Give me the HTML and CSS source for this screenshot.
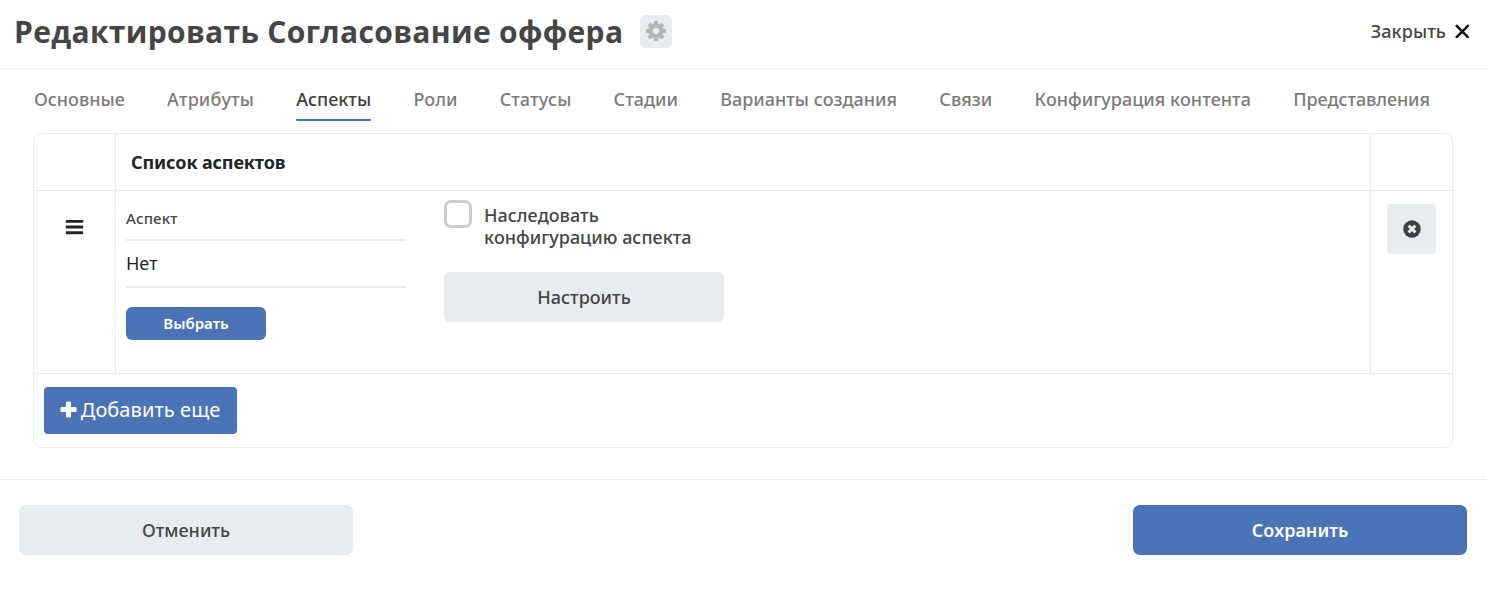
FILE: index.html
```html
<!DOCTYPE html>
<html lang="ru">
<head>
<meta charset="utf-8">
<title>Редактировать Согласование оффера</title>
<link rel="stylesheet" href="styles.css">
</head>
<body>
<header class="header">
  <h1 class="title">Редактировать Согласование оффера</h1>
  <button class="gear" aria-label="Настройки"><svg width="20" height="20" viewBox="0 0 1536 1536"><path fill="#b7b7b7" d="M1024 768q0-106-75-181t-181-75-181 75-75 181 75 181 181 75 181-75 75-181zm512-109v222q0 12-8 23t-20 13l-185 28q-19 54-39 91 35 50 107 138 10 12 10 25t-9 23q-27 37-99 108t-94 71q-12 0-26-9l-138-108q-44 23-91 38-16 136-29 186-7 28-36 28H657q-14 0-24.500-8.500T621 1506l-28-184q-49-16-90-37l-141 107q-10 9-25 9-14 0-25-11-126-114-165-168-7-10-7-23 0-12 8-23 15-21 51-66.500t54-70.500q-27-50-41-99L29 913q-13-2-21-12.500T0 877V655q0-12 8-23t19-13l186-28q14-46 39-92-40-57-107-138-10-12-10-24 0-10 9-23 26-36 98.500-107.500T337 135q13 0 26 10l138 107q44-23 91-38 16-136 29-186 7-28 36-28h222q14 0 24.500 8.500T915 30l28 184q49 16 90 37l142-107q9-9 24-9 13 0 25 10 129 119 165 170 7 8 7 22 0 12-8 23-15 21-51 66.500t-54 70.500q26 50 41 98l183 28q13 2 21 12.500t8 23.500z"/></svg></button>
  <button class="close">Закрыть<svg width="14" height="14" viewBox="0 0 14 14"><path d="M1.700 1.900 12.900 13.100M12.900 1.900 1.700 13.100" stroke="#111" stroke-width="2.500" stroke-linecap="round"/></svg></button>
</header>
<nav class="tabs">
  <a class="tab">Основные</a><a class="tab wide">Атрибуты</a><a class="tab active">Аспекты</a><a class="tab">Роли</a><a class="tab">Статусы</a><a class="tab">Стадии</a><a class="tab">Варианты создания</a><a class="tab">Связи</a><a class="tab">Конфигурация контента</a><a class="tab narrow">Представления</a>
</nav>
<main class="panel">
  <div class="row head"><div></div><div class="list-title">Список аспектов</div><div></div></div>
  <div class="row body">
    <div class="drag"><svg width="19" height="16" viewBox="0 0 19 16"><g fill="#212529"><rect y=".9" x=".8" width="17.400" height="2.900" rx=".6"/><rect y="6.600" x=".8" width="17.400" height="2.900" rx=".6"/><rect y="12.300" x=".8" width="17.400" height="2.900" rx=".6"/></g></svg></div>
    <div class="fields">
      <div class="aspect">
        <div class="label">Аспект</div>
        <div class="value">Нет</div>
        <button class="btn primary pick">Выбрать</button>
      </div>
      <div class="config">
        <label class="check"><span class="box"></span><span>Наследовать<br>конфигурацию аспекта</span></label>
        <button class="btn setup">Настроить</button>
      </div>
    </div>
    <div class="remove"><button class="btn delete" aria-label="Удалить"><svg width="18" height="18" viewBox="0 0 18 18"><circle cx="9" cy="9" r="8.700" fill="#404041"/><path d="m5.600 5.600 6.800 6.800M12.400 5.600l-6.800 6.800" stroke="#e7ecee" stroke-width="2.900"/></svg></button></div>
  </div>
  <div class="add-row"><button class="btn primary add"><svg width="17" height="17" viewBox="0 0 17 17"><path fill="#fff" stroke="#fff" stroke-linejoin="round" d="M6.500 1h4v5.500H16v4h-5.500V16h-4v-5.500H1v-4h5.500z"/></svg>Добавить еще</button></div>
</main>
<footer class="footer"><button class="btn action">Отменить</button><button class="btn primary action">Сохранить</button></footer>
</body>
</html>
```
FILE: styles.css
```css
* { box-sizing: border-box; }
body { margin: 0; background: #fff; color: #454545; font: 500 18px/22px "Noto Sans", "Open Sans", sans-serif; font-kerning: none; }
button { border: 0; margin: 0; padding: 0; font: inherit; font-kerning: none; color: inherit; background: none; }
svg { display: block; }
.header { height: 69px; display: flex; align-items: flex-start; padding: 12px 18px 0 14px; border-bottom: 1px solid #e7ecee; }
.title { width: 609px; margin: 0; font-family: "Open Sans", "Noto Sans", sans-serif; font-size: 30px; line-height: 40px; font-weight: 700; letter-spacing: .33px; white-space: nowrap; }
.gear { width: 32px; height: 33px; margin: 3px 0 0 17px; padding-bottom: 1px; border-radius: 6px; background: #e7ecee; display: grid; place-items: center; }
.close { margin: 8px 0 0 auto; display: flex; align-items: center; gap: 9px; letter-spacing: .1px; }
.tabs { height: 64px; padding: 19px 57px 0 34px; display: flex; justify-content: space-between; align-items: flex-start; color: #7b7b7b; white-space: nowrap; }
.tab { height: 33px; }
.wide { letter-spacing: .12px; }
.narrow { letter-spacing: -.09px; }
.active { color: #404041; border-bottom: 2px solid #4b74b8; border-radius: 1px; }
.panel { width: 1420px; height: 315px; margin-left: 33px; border: 1px solid #e7ecee; border-radius: 8px; }
.row { display: grid; grid-template-columns: 81px 1fr 82px; border-bottom: 1px solid #e7ecee; }
.row > :nth-child(n+2) { border-left: 1px solid #e7ecee; }
.head { height: 57px; }
.list-title { padding: 17px 15px; font-weight: 700; letter-spacing: -.13px; color: #212529; }
.body { height: 183px; }
.drag { padding: 28px 0 0 31px; }
.fields { display: flex; gap: 38px; padding-left: 10px; }
.aspect { width: 280px; }
.label { height: 50px; padding-top: 16px; font-size: 15px; letter-spacing: .15px; border-bottom: 2px solid #e7ecee; }
.value { height: 47px; padding-top: 11px; border-bottom: 2px solid #e7ecee; font-weight: 400; color: #212529; }
.btn { display: flex; align-items: center; justify-content: center; border-radius: 6px; background: #e7ecee; }
.primary { background: #4b74b8; color: #fff; font-weight: 600; }
.pick { width: 140px; height: 33px; margin-top: 19px; padding-bottom: 1px; font-size: 15px; }
.config { width: 280px; }
.check { display: flex; gap: 12px; height: 81px; padding-top: 9px; }
.check > :last-child { padding-top: 4px; }
.box { width: 28px; height: 28px; border: 3px solid #ccc; border-radius: 7px; }
.setup { width: 280px; height: 50px; }
.remove { padding: 13px 0 0 16px; }
.delete { width: 49px; height: 50px; border-radius: 4px; }
.add-row { padding: 13px 10px; }
.add { width: 193px; height: 47px; padding: 0 1px 2px 0; border-radius: 4px; font-size: 20px; font-weight: 400; letter-spacing: .08px; gap: 4px; }
.footer { height: 110px; margin-top: 31px; border-top: 1px solid #e9edee; padding: 25px 20px 0 19px; display: flex; justify-content: space-between; }
.action { width: 334px; height: 50px; border-radius: 7px; }
```
